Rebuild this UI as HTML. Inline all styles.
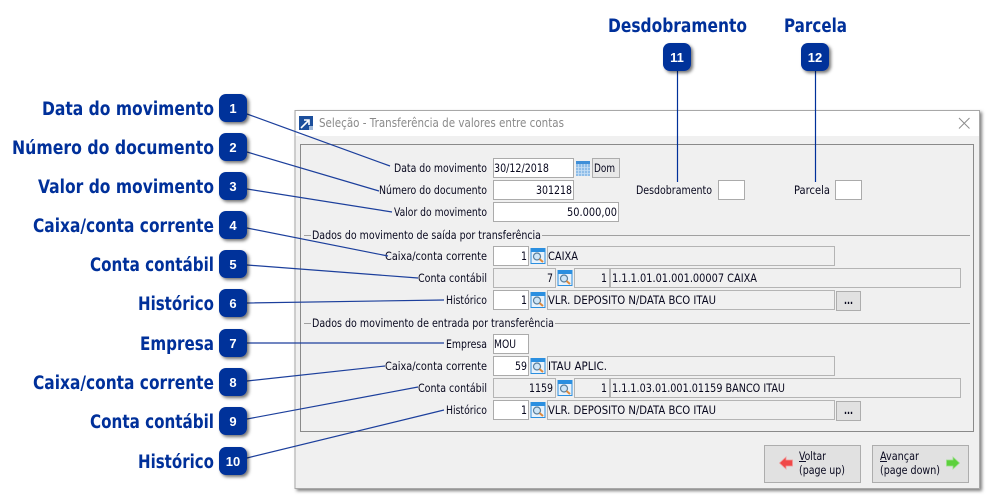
<!DOCTYPE html>
<html><head><meta charset="utf-8"><style>
html,body{margin:0;padding:0;background:#fff;width:993px;height:500px;overflow:hidden}
svg{display:block}
.h{font:bold 18.5px "DejaVu Sans",sans-serif;fill:#00309a}
.n{font:bold 13px "Liberation Sans",sans-serif;fill:#fff;text-anchor:middle}
.t{font:11.5px "DejaVu Sans",sans-serif;fill:#08081e}
.f{fill:#fff;stroke:#ababab}
.g{fill:#f0f0f0;stroke:#b4b4b4}
.b{fill:#e1e1e1;stroke:#adadad}
.l{stroke:#1c3f9c;stroke-width:1.2;fill:none}
</style></head><body>
<svg width="993" height="500" viewBox="0 0 993 500" xmlns="http://www.w3.org/2000/svg">
<defs>
<filter id="s" x="-30%" y="-30%" width="170%" height="170%"><feDropShadow dx="2" dy="2" stdDeviation="1.5" flood-color="#000" flood-opacity=".55"/></filter>
<filter id="w" x="-3%" y="-3%" width="106%" height="106%"><feDropShadow dx="2" dy="2" stdDeviation="1.5" flood-color="#000" flood-opacity=".5"/></filter>
<g id="q"><rect x=".5" y=".5" width="14" height="15" fill="#e8f2fb" stroke="#2b8fe0"/><rect x="1" y="1" width="13" height="3" fill="#2b8fe0"/><circle cx="6.5" cy="8.5" r="3.5" fill="#cfe6f7" stroke="#5a7f9c" stroke-width="1.2"/><path d="M9 11l3.5 3" stroke="#e08a3c" stroke-width="2"/></g>
<g id="bd"><rect x="0" y="0" width="28" height="28" rx="7" fill="#00309a" filter="url(#s)"/></g>
</defs>

<!-- window -->
<rect x="295" y="110.500" width="684.500" height="378" fill="#f0f0f0" stroke="#a8a8a8" filter="url(#w)"/>
<rect x="296" y="111" width="683" height="25" fill="#fff"/>
<rect x="299" y="116" width="14" height="14" fill="#1c4f9c"/>
<path d="M301 128l7-7M304 120h5v5" stroke="#fff" stroke-width="1.600" fill="none"/>
<path d="M309 126h4v4h-4z" fill="#9fb8d8"/>
<text class="t" x="319" y="127" textLength="245" lengthAdjust="spacingAndGlyphs" style="fill:#8a8a8a;font-size:12.500px">Seleção - Transferência de valores entre contas</text>
<path d="M959 118l10.500 10.500M969.500 118L959 128.500" stroke="#8c8c8c" stroke-width="1" fill="none"/>

<!-- panel -->
<rect x="300.500" y="144.500" width="673" height="287" fill="#f0f0f0" stroke="#8a8a8a"/>

<!-- fields top -->
<rect class="f" x="493.500" y="158.500" width="80" height="19"/>
<rect x="576" y="161" width="14" height="15" fill="#8fbde8"/><rect x="576" y="161" width="14" height="3" fill="#3f8fd8"/>
<path d="M578.500 164v12M581.500 164v12M584.500 164v12M587.500 164v12M576 167.500h14M576 170.500h14M576 173.500h14" stroke="#c8e0f5" stroke-width=".8"/>
<rect class="b" x="592.500" y="158.500" width="27" height="19" style="fill:#e8e8e8"/>
<text class="t" x="494" y="172" textLength="55" lengthAdjust="spacingAndGlyphs">30/12/2018</text>
<text class="t" x="594" y="172" textLength="21" lengthAdjust="spacingAndGlyphs">Dom</text>
<rect class="f" x="493.500" y="180.500" width="80" height="19"/>
<text class="t" x="536" y="194" textLength="36" lengthAdjust="spacingAndGlyphs">301218</text>
<rect class="f" x="493.500" y="202.500" width="125" height="19"/>
<text class="t" x="567" y="216" textLength="50" lengthAdjust="spacingAndGlyphs">50.000,00</text>
<text class="t" x="636" y="194" textLength="76" lengthAdjust="spacingAndGlyphs">Desdobramento</text>
<rect class="f" x="718.500" y="180.500" width="26" height="19"/>
<text class="t" x="794" y="194" textLength="36" lengthAdjust="spacingAndGlyphs">Parcela</text>
<rect class="f" x="835.500" y="180.500" width="26" height="19"/>

<!-- labels -->
<text class="t" x="394" y="172" textLength="93" lengthAdjust="spacingAndGlyphs">Data do movimento</text>
<text class="t" x="379" y="194" textLength="108" lengthAdjust="spacingAndGlyphs">Número do documento</text>
<text class="t" x="394" y="216" textLength="93" lengthAdjust="spacingAndGlyphs">Valor do movimento</text>

<!-- section 1 -->
<path d="M304 235.500h7M542 235.500h428" stroke="#a0a0a0"/>
<text class="t" x="312" y="239" textLength="229" lengthAdjust="spacingAndGlyphs">Dados do movimento de saída por transferência</text>
<text class="t" x="385" y="260" textLength="102" lengthAdjust="spacingAndGlyphs">Caixa/conta corrente</text>
<rect class="f" x="493.500" y="246.500" width="35" height="19"/>
<text class="t" x="521" y="260" textLength="6" lengthAdjust="spacingAndGlyphs">1</text>
<use href="#q" x="530.500" y="248"/>
<rect class="g" x="547.500" y="246.500" width="287" height="19"/>
<text class="t" x="548" y="260" textLength="30" lengthAdjust="spacingAndGlyphs">CAIXA</text>

<text class="t" x="418" y="282" textLength="69" lengthAdjust="spacingAndGlyphs">Conta contábil</text>
<rect class="g" x="493.500" y="268.500" width="62" height="19"/>
<text class="t" x="547" y="282" textLength="6" lengthAdjust="spacingAndGlyphs">7</text>
<use href="#q" x="557.500" y="270"/>
<rect class="g" x="574.500" y="268.500" width="35" height="19"/>
<text class="t" x="601" y="282" textLength="6" lengthAdjust="spacingAndGlyphs">1</text>
<rect class="g" x="610.500" y="268.500" width="350" height="19"/>
<text class="t" x="612" y="282" textLength="145" lengthAdjust="spacingAndGlyphs">1.1.1.01.01.001.00007 CAIXA</text>

<text class="t" x="446" y="304" textLength="41" lengthAdjust="spacingAndGlyphs">Histórico</text>
<rect class="f" x="493.500" y="290.500" width="35" height="19"/>
<text class="t" x="521" y="304" textLength="6" lengthAdjust="spacingAndGlyphs">1</text>
<use href="#q" x="530.500" y="292"/>
<rect class="g" x="547.500" y="290.500" width="287" height="19"/>
<text class="t" x="548" y="304" textLength="168" lengthAdjust="spacingAndGlyphs">VLR. DEPOSITO N/DATA BCO ITAU</text>
<rect class="b" x="836.500" y="291.500" width="24" height="19"/>
<text class="t" x="844" y="304" textLength="9" lengthAdjust="spacingAndGlyphs" style="font-weight:bold">...</text>

<!-- section 2 -->
<path d="M304 323.500h7M555 323.500h415" stroke="#a0a0a0"/>
<text class="t" x="312" y="327" textLength="242" lengthAdjust="spacingAndGlyphs">Dados do movimento de entrada por transferência</text>
<text class="t" x="446" y="348" textLength="41" lengthAdjust="spacingAndGlyphs">Empresa</text>
<rect class="f" x="493.500" y="334.500" width="35" height="19"/>
<text class="t" x="494" y="348" textLength="22" lengthAdjust="spacingAndGlyphs">MOU</text>

<text class="t" x="385" y="370" textLength="102" lengthAdjust="spacingAndGlyphs">Caixa/conta corrente</text>
<rect class="f" x="493.500" y="356.500" width="35" height="19"/>
<text class="t" x="515" y="370" textLength="12" lengthAdjust="spacingAndGlyphs">59</text>
<use href="#q" x="530.500" y="358"/>
<rect class="g" x="547.500" y="356.500" width="287" height="19"/>
<text class="t" x="548" y="370" textLength="59" lengthAdjust="spacingAndGlyphs">ITAU APLIC.</text>

<text class="t" x="418" y="392" textLength="69" lengthAdjust="spacingAndGlyphs">Conta contábil</text>
<rect class="g" x="493.500" y="378.500" width="62" height="19"/>
<text class="t" x="529" y="392" textLength="24" lengthAdjust="spacingAndGlyphs">1159</text>
<use href="#q" x="557.500" y="380"/>
<rect class="g" x="574.500" y="378.500" width="35" height="19"/>
<text class="t" x="601" y="392" textLength="6" lengthAdjust="spacingAndGlyphs">1</text>
<rect class="g" x="610.500" y="378.500" width="350" height="19"/>
<text class="t" x="612" y="392" textLength="173" lengthAdjust="spacingAndGlyphs">1.1.1.03.01.001.01159 BANCO ITAU</text>

<text class="t" x="446" y="414" textLength="41" lengthAdjust="spacingAndGlyphs">Histórico</text>
<rect class="f" x="493.500" y="400.500" width="35" height="19"/>
<text class="t" x="521" y="414" textLength="6" lengthAdjust="spacingAndGlyphs">1</text>
<use href="#q" x="530.500" y="402"/>
<rect class="g" x="547.500" y="400.500" width="287" height="19"/>
<text class="t" x="548" y="414" textLength="168" lengthAdjust="spacingAndGlyphs">VLR. DEPOSITO N/DATA BCO ITAU</text>
<rect class="b" x="836.500" y="401.500" width="24" height="19"/>
<text class="t" x="844" y="414" textLength="9" lengthAdjust="spacingAndGlyphs" style="font-weight:bold">...</text>

<!-- bottom buttons -->
<rect class="b" x="764.500" y="445.500" width="96" height="37"/>
<path d="M779.500 463l6.500-6v3h6.500v6H786v3z" fill="#f04848" stroke="#f09a9a" stroke-width=".8"/>
<text class="t" x="799" y="460" textLength="27" lengthAdjust="spacingAndGlyphs">Voltar</text>
<path d="M799 461.500h7" stroke="#10102a"/>
<text class="t" x="799" y="474" textLength="46" lengthAdjust="spacingAndGlyphs">(page up)</text>
<rect class="b" x="872.500" y="445.500" width="96" height="37"/>
<text class="t" x="880" y="460" textLength="39" lengthAdjust="spacingAndGlyphs">Avançar</text>
<path d="M880 461.500h7" stroke="#10102a"/>
<text class="t" x="880" y="474" textLength="60" lengthAdjust="spacingAndGlyphs">(page down)</text>
<path d="M959.500 463l-6.500-6v3h-6.500v6h6.500v3z" fill="#5cd03c" stroke="#9adf8a" stroke-width=".8"/>

<!-- callout lines -->
<path class="l" d="M247 114L390 166M247 152L379 191M247 189L392 212M247 228L388 256M247 265L418 278M247 303L444 300M247 343L444 343M247 381L385 366M247 419L418 387M247 458L444 410"/>
<path d="M677.500 71V182M815.500 71V182" stroke="#00309a" stroke-width="1.200"/>

<!-- headings -->
<text class="h" x="42" y="115" textLength="172" lengthAdjust="spacingAndGlyphs">Data do movimento</text>
<text class="h" x="12" y="154" textLength="202" lengthAdjust="spacingAndGlyphs">Número do documento</text>
<text class="h" x="38" y="193" textLength="176" lengthAdjust="spacingAndGlyphs">Valor do movimento</text>
<text class="h" x="33" y="232" textLength="181" lengthAdjust="spacingAndGlyphs">Caixa/conta corrente</text>
<text class="h" x="90" y="271" textLength="124" lengthAdjust="spacingAndGlyphs">Conta contábil</text>
<text class="h" x="138" y="310" textLength="76" lengthAdjust="spacingAndGlyphs">Histórico</text>
<text class="h" x="140" y="350" textLength="74" lengthAdjust="spacingAndGlyphs">Empresa</text>
<text class="h" x="33" y="389" textLength="181" lengthAdjust="spacingAndGlyphs">Caixa/conta corrente</text>
<text class="h" x="90" y="428" textLength="124" lengthAdjust="spacingAndGlyphs">Conta contábil</text>
<text class="h" x="138" y="468" textLength="76" lengthAdjust="spacingAndGlyphs">Histórico</text>
<text class="h" x="608" y="32" textLength="139" lengthAdjust="spacingAndGlyphs">Desdobramento</text>
<text class="h" x="784" y="32" textLength="63" lengthAdjust="spacingAndGlyphs">Parcela</text>

<!-- badges -->
<use href="#bd" x="219" y="94"/><text class="n" x="233" y="113">1</text>
<use href="#bd" x="219" y="133"/><text class="n" x="233" y="152">2</text>
<use href="#bd" x="219" y="172"/><text class="n" x="233" y="191">3</text>
<use href="#bd" x="219" y="211"/><text class="n" x="233" y="230">4</text>
<use href="#bd" x="219" y="250"/><text class="n" x="233" y="269">5</text>
<use href="#bd" x="219" y="289"/><text class="n" x="233" y="308">6</text>
<use href="#bd" x="219" y="329"/><text class="n" x="233" y="348">7</text>
<use href="#bd" x="219" y="368"/><text class="n" x="233" y="387">8</text>
<use href="#bd" x="219" y="407"/><text class="n" x="233" y="426">9</text>
<use href="#bd" x="219" y="447"/><text class="n" x="233" y="466">10</text>
<use href="#bd" x="663" y="43"/><text class="n" x="677" y="62">11</text>
<use href="#bd" x="801" y="43"/><text class="n" x="815" y="62">12</text>
</svg>
</body></html>
